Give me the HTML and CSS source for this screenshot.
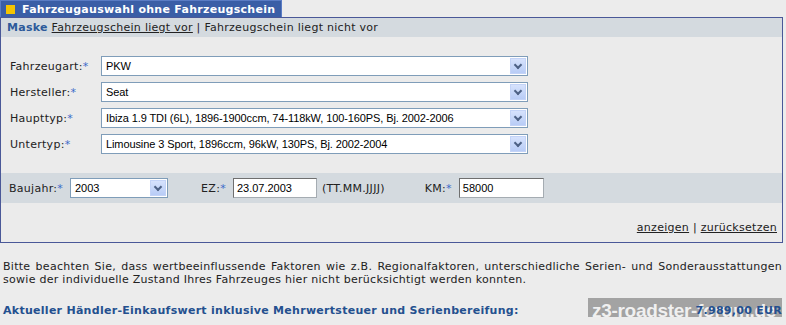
FILE: index.html
```html
<!DOCTYPE html>
<html lang="de">
<head>
<meta charset="UTF-8">
<title>Fahrzeugauswahl</title>
<link rel="stylesheet" href="styles.css">
</head>
<body>
  <div class="tab"><span class="tab-mark"></span>Fahrzeugauswahl ohne Fahrzeugschein</div>
  <div class="box">
    <div class="head">
      <b class="maske">Maske</b> <a href="#" class="link">Fahrzeugschein liegt vor</a> | Fahrzeugschein liegt nicht vor
    </div>

    <div class="fields">
      <div class="row">
        <span class="label">Fahrzeugart:<i class="req">*</i></span>
        <div class="select wide"><span class="val">PKW</span><span class="arrow"></span></div>
      </div>
      <div class="row">
        <span class="label">Hersteller:<i class="req">*</i></span>
        <div class="select wide"><span class="val">Seat</span><span class="arrow"></span></div>
      </div>
      <div class="row">
        <span class="label">Haupttyp:<i class="req">*</i></span>
        <div class="select wide"><span class="val">Ibiza 1.9 TDI (6L), 1896-1900ccm, 74-118kW, 100-160PS, Bj. 2002-2006</span><span class="arrow"></span></div>
      </div>
      <div class="row">
        <span class="label">Untertyp:<i class="req">*</i></span>
        <div class="select wide"><span class="val">Limousine 3 Sport, 1896ccm, 96kW, 130PS, Bj. 2002-2004</span><span class="arrow"></span></div>
      </div>
    </div>

    <div class="band">
      <span class="blabel">Baujahr:<i class="req">*</i></span>
      <div class="select small"><span class="val">2003</span><span class="arrow"></span></div>
      <span class="blabel ez">EZ:<i class="req">*</i></span>
      <div class="input ezin">23.07.2003</div>
      <span class="hint">(TT.MM.JJJJ)</span>
      <span class="blabel km">KM:<i class="req">*</i></span>
      <div class="input kmin">58000</div>
    </div>

    <div class="actions">
      <a href="#" class="link">anzeigen</a> | <a href="#" class="link">zurücksetzen</a>
    </div>
  </div>

  <p class="note">Bitte beachten Sie, dass wertbeeinflussende Faktoren wie z.B. Regionalfaktoren, unterschiedliche Serien- und Sonderausstattungen sowie der individuelle Zustand Ihres Fahrzeuges hier nicht berücksichtigt werden konnten.</p>

  <div class="result">
    <span>Aktueller Händler-Einkaufswert inklusive Mehrwertsteuer und Serienbereifung:</span>
    <span class="price">7.989,00 EUR</span>
    <div class="watermark">z3-roadster-forum.de</div>
  </div>
</body>
</html>
```

FILE: styles.css
```css
body {
  margin: 0;
  background: #ececec;
  font-family: "DejaVu Sans", Verdana, sans-serif;
  font-size: 11px;
  letter-spacing: 0.28px;
  color: #222;
}

.tab {
  display: inline-flex;
  align-items: center;
  height: 17px;
  padding: 0 6px 0 5px;
  background: #3a5ea6;
  border: 1px solid #5a7cc4;
  border-bottom: none;
  box-sizing: border-box;
  color: #fff;
  font-weight: bold;
}
.tab-mark {
  width: 9px;
  height: 9px;
  background: #f5c400;
  margin-right: 7px;
}

.box {
  border: 1px solid #4a5898;
  margin-right: 3px;
  background: #ebebeb;
}

.head {
  height: 19px;
  line-height: 19px;
  padding-left: 6px;
  background: #d4dadf;
}
.maske {
  color: #2d5a9a;
}
.link {
  color: #222;
  text-decoration: underline;
}

.fields {
  padding: 19px 0 0 9px;
  display: flex;
  flex-direction: column;
  gap: 6px;
}
.row {
  display: flex;
  align-items: center;
}
.label {
  width: 91px;
}
.req {
  font-style: normal;
  color: #3b6bc9;
}

.select {
  display: flex;
  align-items: center;
  height: 20px;
  box-sizing: border-box;
  border: 1px solid #7f9db9;
  background: #fff;
  font-family: "Liberation Sans", Arial, sans-serif;
  font-size: 11px;
  letter-spacing: -0.1px;
  color: #000;
}
.select .val {
  flex: 1;
  padding-left: 4px;
  white-space: nowrap;
  overflow: hidden;
}
.arrow {
  width: 16px;
  height: 16px;
  margin-right: 1px;
  background: linear-gradient(#d6e2fc, #b8ccf6);
  border: 1px solid #c3d3f7;
  box-sizing: border-box;
  position: relative;
}
.arrow::after {
  content: "";
  position: absolute;
  left: 4px;
  top: 3px;
  width: 4px;
  height: 4px;
  border-right: 2px solid #4d6185;
  border-bottom: 2px solid #4d6185;
  transform: rotate(45deg);
}
.wide {
  width: 427px;
}
.small {
  width: 98px;
}

.band {
  margin-top: 19px;
  height: 30px;
  background: #d4dadf;
  display: flex;
  align-items: center;
  padding-left: 8px;
}
.blabel {
  margin-right: 7px;
}
.ez {
  margin-left: 33px;
}
.km {
  margin-left: 40px;
}
.input {
  height: 20px;
  line-height: 18px;
  box-sizing: border-box;
  padding-left: 3px;
  background: #fff;
  border: 1px solid #a5acb2;
  border-top-color: #6f6f6f;
  border-left-color: #6f6f6f;
  font-family: "Liberation Sans", Arial, sans-serif;
  letter-spacing: 0;
  color: #000;
}
.ezin {
  width: 84px;
}
.kmin {
  width: 85px;
}
.hint {
  margin-left: 5px;
}

.actions {
  text-align: right;
  padding: 18px 5px 8px 0;
}

.note {
  margin: 17px 4px 0 3px;
  line-height: 13px;
  text-align: justify;
}

.result {
  position: relative;
  margin: 18px 4px 0 3px;
  display: flex;
  justify-content: space-between;
  font-weight: bold;
  color: #24508f;
}
.price {
  position: relative;
  z-index: 1;
}
.watermark {
  position: absolute;
  right: 0;
  top: -6px;
  width: 194px;
  height: 25px;
  line-height: 25px;
  padding-left: 4px;
  box-sizing: border-box;
  background: rgba(125, 125, 125, 0.65);
  color: rgba(255, 255, 255, 0.85);
  font-family: "Liberation Sans", Arial, sans-serif;
  font-size: 19px;
  font-weight: bold;
  letter-spacing: -0.3px;
  white-space: nowrap;
  overflow: hidden;
}
```
